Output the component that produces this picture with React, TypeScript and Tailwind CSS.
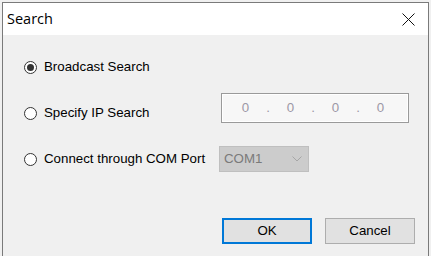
import React from 'react';

function Radio({ checked }: { checked?: boolean }) {
  return (
    <span className="flex h-[13px] w-[13px] shrink-0 items-center justify-center rounded-full border border-[#333333] bg-white">
      {checked && <span className="h-[7px] w-[7px] rounded-full bg-[#333333]" />}
    </span>
  );
}

export default function App() {
  const octets = ['0', '0', '0', '0'];

  return (
    <div className="h-[256px] w-[431px] overflow-hidden bg-[#f0f0f0] pl-[2px] pt-[2px] font-['Liberation_Sans',Arial,sans-serif] text-[13.3px] text-black">
      <div className="flex h-[254px] w-[427px] flex-col border-l border-r border-t border-[#7a7a7a]">
        {/* title bar */}
        <div className="flex h-[32px] shrink-0 items-center justify-between bg-white pl-[4px] pr-[13px]">
          <span className="font-['Open_Sans',sans-serif] text-[14.5px] leading-none">Search</span>
          <svg width="13" height="13" viewBox="0 0 13 13" fill="none" stroke="#111" strokeWidth="1">
            <path d="M0.5 0.5 L12.5 12.5 M12.5 0.5 L0.5 12.5" />
          </svg>
        </div>

        {/* body */}
        <div className="flex flex-1 flex-col bg-[#f0f0f0] pl-[21px] pt-[19px]">
          <div className="flex h-[26px] items-center">
            <Radio checked />
            <span className="ml-[7px]">Broadcast Search</span>
          </div>

          <div className="mt-[20px] flex h-[26px] items-start">
            <div className="flex h-[26px] w-[195px] items-center">
              <Radio />
              <span className="ml-[7px]">Specify IP Search</span>
            </div>
            <div className="-mt-[7px] ml-[2px] flex h-[30px] w-[188px] items-center border border-[#9a9a9a] bg-[#f7f7f7] shadow-[inset_0_0_0_1px_#ffffff] pl-[1px] text-[#9d98a6]">
              {octets.map((o, i) => (
                <React.Fragment key={i}>
                  {i > 0 && <span className="-mx-[3px] w-[6px] text-center">.</span>}
                  <span className="w-[45px] text-center">{o}</span>
                </React.Fragment>
              ))}
            </div>
          </div>

          <div className="mt-[20px] flex h-[26px] items-center">
            <div className="flex w-[195px] items-center">
              <Radio />
              <span className="ml-[7px]">Connect through COM Port</span>
            </div>
            <div className="flex h-[26px] w-[90px] items-center justify-between border border-[#bfbfbf] bg-[#cccccc] pl-[4px] pr-[6px] text-[#7a7a7a]">
              <span>COM1</span>
              <svg width="10" height="6" viewBox="0 0 10 6" fill="none" stroke="#a6a6a6" strokeWidth="1">
                <path d="M0.5 0.5 L5 5 L9.5 0.5" />
              </svg>
            </div>
          </div>

          <div className="mt-[46px] flex justify-end gap-[13px] pr-[13px]">
            <button className="h-[26px] w-[90px] border-2 border-[#0078d7] bg-[#e1e1e1]">OK</button>
            <button className="h-[26px] w-[90px] border border-[#adadad] bg-[#e1e1e1]">Cancel</button>
          </div>
        </div>
      </div>
    </div>
  );
}
